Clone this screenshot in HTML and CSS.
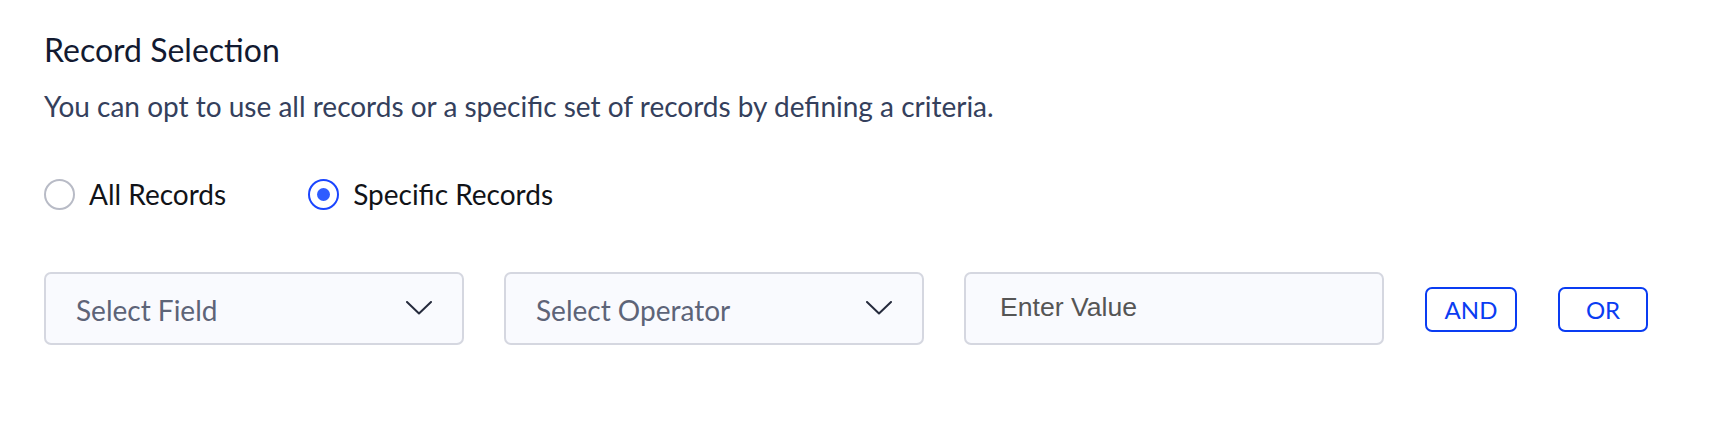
FILE: index.html
```html
<!DOCTYPE html>
<html>
<head>
<meta charset="utf-8">
<link rel="stylesheet" href="styles.css">
</head>
<body>
<section class="panel">
  <h2 class="title">Record Selection</h2>
  <p class="desc">You can opt to use all records or a specific set of records by defining a criteria.</p>
  <div class="radios">
    <label class="radio">
      <span class="circle"></span>
      <span class="label">All Records</span>
    </label>
    <label class="radio checked">
      <span class="circle"><span class="dot"></span></span>
      <span class="label">Specific Records</span>
    </label>
  </div>
  <div class="criteria">
    <div class="select">
      <span class="ph">Select Field</span>
      <svg class="chev" width="26" height="14" viewBox="0 0 26 14"><path d="M1 1 L13 12.5 L25 1" fill="none" stroke="#262b3d" stroke-width="2" stroke-linecap="round" stroke-linejoin="round"/></svg>
    </div>
    <div class="select">
      <span class="ph">Select Operator</span>
      <svg class="chev" width="26" height="14" viewBox="0 0 26 14"><path d="M1 1 L13 12.5 L25 1" fill="none" stroke="#262b3d" stroke-width="2" stroke-linecap="round" stroke-linejoin="round"/></svg>
    </div>
    <div class="input">
      <span class="val">Enter Value</span>
    </div>
    <button class="btn btn-and">AND</button>
    <button class="btn btn-or">OR</button>
  </div>
</section>
</body>
</html>
```
FILE: styles.css
```css
html, body {
  margin: 0;
  padding: 0;
  background: #ffffff;
}
.panel {
  padding: 31px 0 0 44px;
  font-family: Lato, "Open Sans", sans-serif;
}
.title {
  margin: 0;
  font-size: 32px;
  font-weight: 400;
  line-height: 38px;
  color: #121a31;
}
.desc {
  margin: 20px 0 0 0;
  font-size: 28px;
  line-height: 34px;
  color: #34405c;
}
.radios {
  display: flex;
  align-items: center;
  margin-top: 55px;
  height: 32px;
}
.radio {
  display: flex;
  align-items: center;
  margin-right: 82px;
}
.circle {
  width: 31px;
  height: 31px;
  box-sizing: border-box;
  border-radius: 50%;
  border: 2px solid #b8bbc6;
  display: flex;
  align-items: center;
  justify-content: center;
}
.checked .circle {
  border-color: #1a45ff;
}
.dot {
  width: 13px;
  height: 13px;
  border-radius: 50%;
  background: #2e5cff;
}
.label {
  margin-left: 14px;
  font-size: 28px;
  color: #111318;
}
.criteria {
  display: flex;
  align-items: center;
  margin-top: 62px;
}
.select, .input {
  box-sizing: border-box;
  width: 420px;
  height: 73px;
  border: 2px solid #d5d7e0;
  border-radius: 7px;
  background: #f9fafe;
  display: flex;
  align-items: center;
  margin-right: 40px;
}
.select {
  padding: 3px 30px 0 30px;
  justify-content: space-between;
}
.ph {
  font-size: 28px;
  color: #5d6478;
}
.chev {
  display: block;
  margin-top: -4px;
}
.input {
  padding: 0 0 2px 34px;
}
.val {
  font-family: "Liberation Sans", Arial, sans-serif;
  font-size: 26.6px;
  color: #555555;
}
.btn {
  box-sizing: border-box;
  height: 45px;
  border: 2px solid #0a3cf2;
  border-radius: 7px;
  background: #ffffff;
  color: #0a3cf2;
  font-family: Lato, sans-serif;
  font-size: 24px;
  padding: 0;
  margin-top: 2px;
}
.btn-and {
  width: 92px;
  margin-left: 1px;
}
.btn-or {
  width: 90px;
  margin-left: 41px;
}
```
